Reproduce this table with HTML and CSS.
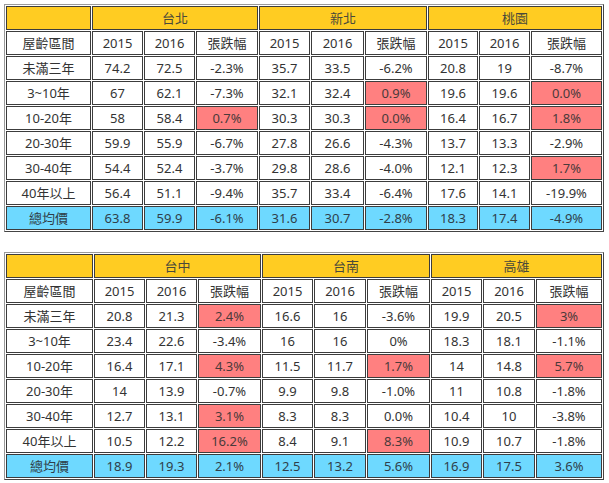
FILE: index.html
```html
<!DOCTYPE html>
<html lang="zh-Hant">
<head>
<meta charset="utf-8">
<title>屋齡區間 均價</title>
<link rel="stylesheet" href="styles.css">
</head>
<body>
<table class="grid t1">
  <colgroup>
    <col class="c85"><col class="c51"><col class="c51"><col class="c62">
    <col class="c51"><col class="c53"><col class="c62">
    <col class="c50"><col class="c51"><col class="c71">
  </colgroup>
  <tr class="head"><td></td><td colspan="3">台北</td><td colspan="3">新北</td><td colspan="3">桃園</td></tr>
  <tr><td>屋齡區間</td><td>2015</td><td>2016</td><td>張跌幅</td><td>2015</td><td>2016</td><td>張跌幅</td><td>2015</td><td>2016</td><td>張跌幅</td></tr>
  <tr><td>未滿三年</td><td>74.2</td><td>72.5</td><td>-2.3%</td><td>35.7</td><td>33.5</td><td>-6.2%</td><td>20.8</td><td>19</td><td>-8.7%</td></tr>
  <tr><td>3~10年</td><td>67</td><td>62.1</td><td>-7.3%</td><td>32.1</td><td>32.4</td><td class="up">0.9%</td><td>19.6</td><td>19.6</td><td class="up">0.0%</td></tr>
  <tr><td>10-20年</td><td>58</td><td>58.4</td><td class="up">0.7%</td><td>30.3</td><td>30.3</td><td class="up">0.0%</td><td>16.4</td><td>16.7</td><td class="up">1.8%</td></tr>
  <tr><td>20-30年</td><td>59.9</td><td>55.9</td><td>-6.7%</td><td>27.8</td><td>26.6</td><td>-4.3%</td><td>13.7</td><td>13.3</td><td>-2.9%</td></tr>
  <tr><td>30-40年</td><td>54.4</td><td>52.4</td><td>-3.7%</td><td>29.8</td><td>28.6</td><td>-4.0%</td><td>12.1</td><td>12.3</td><td class="up">1.7%</td></tr>
  <tr><td>40年以上</td><td>56.4</td><td>51.1</td><td>-9.4%</td><td>35.7</td><td>33.4</td><td>-6.4%</td><td>17.6</td><td>14.1</td><td>-19.9%</td></tr>
  <tr class="total"><td>總均價</td><td>63.8</td><td>59.9</td><td>-6.1%</td><td>31.6</td><td>30.7</td><td>-2.8%</td><td>18.3</td><td>17.4</td><td>-4.9%</td></tr>
</table>

<table class="grid t2">
  <colgroup>
    <col class="c87"><col class="c51"><col class="c51"><col class="c63">
    <col class="c51"><col class="c52"><col class="c63">
    <col class="c51"><col class="c52"><col class="c66">
  </colgroup>
  <tr class="head"><td></td><td colspan="3">台中</td><td colspan="3">台南</td><td colspan="3">高雄</td></tr>
  <tr><td>屋齡區間</td><td>2015</td><td>2016</td><td>張跌幅</td><td>2015</td><td>2016</td><td>張跌幅</td><td>2015</td><td>2016</td><td>張跌幅</td></tr>
  <tr><td>未滿三年</td><td>20.8</td><td>21.3</td><td class="up">2.4%</td><td>16.6</td><td>16</td><td>-3.6%</td><td>19.9</td><td>20.5</td><td class="up">3%</td></tr>
  <tr><td>3~10年</td><td>23.4</td><td>22.6</td><td>-3.4%</td><td>16</td><td>16</td><td>0%</td><td>18.3</td><td>18.1</td><td>-1.1%</td></tr>
  <tr><td>10-20年</td><td>16.4</td><td>17.1</td><td class="up">4.3%</td><td>11.5</td><td>11.7</td><td class="up">1.7%</td><td>14</td><td>14.8</td><td class="up">5.7%</td></tr>
  <tr><td>20-30年</td><td>14</td><td>13.9</td><td>-0.7%</td><td>9.9</td><td>9.8</td><td>-1.0%</td><td>11</td><td>10.8</td><td>-1.8%</td></tr>
  <tr><td>30-40年</td><td>12.7</td><td>13.1</td><td class="up">3.1%</td><td>8.3</td><td>8.3</td><td>0.0%</td><td>10.4</td><td>10</td><td>-3.8%</td></tr>
  <tr><td>40年以上</td><td>10.5</td><td>12.2</td><td class="up">16.2%</td><td>8.4</td><td>9.1</td><td class="up">8.3%</td><td>10.9</td><td>10.7</td><td>-1.8%</td></tr>
  <tr class="total"><td>總均價</td><td>18.9</td><td>19.3</td><td>2.1%</td><td>12.5</td><td>13.2</td><td>5.6%</td><td>16.9</td><td>17.5</td><td>3.6%</td></tr>
</table>
</body>
</html>
```
FILE: styles.css
```css
html, body {
  margin: 0;
  padding: 0;
  background: #ffffff;
}
body {
  padding: 4px 0 0 4px;
  font-family: "Noto Sans", "Noto Sans CJK TC", sans-serif;
  font-size: 13px;
  color: #333333;
}
.grid {
  table-layout: fixed;
  width: 600px;
  border-collapse: separate;
  border-spacing: 1px;
  border-style: solid;
  border-width: 1px;
  border-color: #9a9a9a #444444 #444444 #9a9a9a;
}
.t2 {
  margin-top: 20px;
}
.grid td {
  height: 22px;
  padding: 0;
  border: 1px solid #3c3c3c;
  text-align: center;
  vertical-align: middle;
  line-height: 22px;
  white-space: nowrap;
  overflow: hidden;
  background: #ffffff;
}
.grid .head td {
  background: #ffcc22;
  color: #4a4a3a;
}
.grid .total td {
  background: #6ed9ff;
  color: #2f3f4a;
}
.grid td.up {
  background: #ff8080;
  color: #4a3a3a;
}
.c50 { width: 50px; }
.c51 { width: 51px; }
.c52 { width: 52px; }
.c53 { width: 53px; }
.c62 { width: 62px; }
.c63 { width: 63px; }
.c66 { width: 66px; }
.c71 { width: 71px; }
.c85 { width: 85px; }
.c87 { width: 87px; }
```
